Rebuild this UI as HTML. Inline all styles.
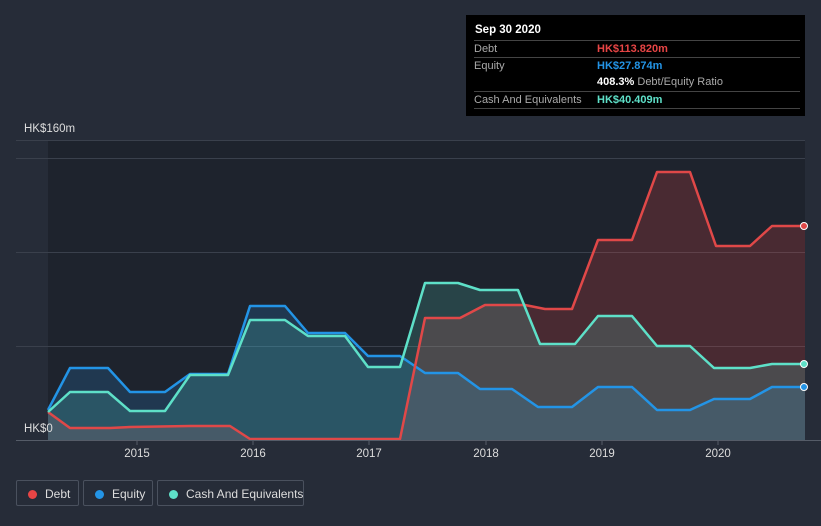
<!DOCTYPE html>
<html><head><meta charset="utf-8"><style>
html,body{margin:0;padding:0;background:#262c38;width:821px;height:526px;overflow:hidden;font-family:"Liberation Sans",sans-serif}
.tip{position:absolute;left:466px;top:15px;width:339px;height:101px;background:#000;color:#fff;font-size:11px}
.tip .h{position:absolute;left:9px;top:9px;font-weight:bold;font-size:11.5px}
.row{position:absolute;left:8px;width:326px;border-top:1px solid #444;height:17px;line-height:17px}
.row span{position:absolute;left:123px;font-weight:bold}
.lab{color:#aaa}
.leg{position:absolute;top:480px;height:26px;border:1px solid #4a515e;border-radius:2px;color:#ddd;font-size:12px;line-height:26px;box-sizing:border-box;white-space:nowrap}
.leg span{white-space:nowrap}
.leg i{position:absolute;left:11px;top:9px;width:9px;height:9px;border-radius:50%}
</style></head><body>
<svg width="821" height="526" style="position:absolute;left:0;top:0">
<rect x="48" y="140" width="757" height="300" fill="#1e232d"/>
<g stroke="#3a404c" stroke-width="1">
<line x1="16" y1="140.5" x2="805" y2="140.5"/>
<line x1="16" y1="158.5" x2="805" y2="158.5"/>
<line x1="16" y1="252.5" x2="805" y2="252.5"/>
<line x1="16" y1="346.5" x2="805" y2="346.5"/>
</g>
<polygon fill="rgba(229,70,70,0.22)" points="48,412 70,428 110,428 130,427 190,426 230,426 250,439 400,439 425,318 460,318 485,305 525,305 545,309 572,309 598,240 632,240 657,172 690,172 716,246 750,246 772,226 805,226 805,440 48,440"/>
<polygon fill="rgba(40,140,220,0.2)" points="48,410 70,368 108,368 130,392 165,392 190,374 228,374 250,306 285,306 308,333 345,333 368,356 400,356 425,373 458,373 480,389 512,389 538,407 572,407 598,387 632,387 657,410 690,410 714,399 750,399 772,387 805,387 805,440 48,440"/>
<polygon fill="rgba(90,220,200,0.18)" points="48,412 70,392 108,392 130,411 165,411 190,375 228,375 250,320 285,320 308,336 345,336 368,367 400,367 425,283 458,283 480,290 518,290 540,344 575,344 598,316 632,316 657,346 690,346 714,368 750,368 772,364 805,364 805,440 48,440"/>
<g fill="none" stroke-width="2.5" stroke-linejoin="round">
<polyline stroke="#2394e6" points="48,410 70,368 108,368 130,392 165,392 190,374 228,374 250,306 285,306 308,333 345,333 368,356 400,356 425,373 458,373 480,389 512,389 538,407 572,407 598,387 632,387 657,410 690,410 714,399 750,399 772,387 805,387"/>
<polyline stroke="#e04848" points="48,412 70,428 110,428 130,427 190,426 230,426 250,439 400,439 425,318 460,318 485,305 525,305 545,309 572,309 598,240 632,240 657,172 690,172 716,246 750,246 772,226 805,226"/>
<polyline stroke="#5ee0c8" points="48,412 70,392 108,392 130,411 165,411 190,375 228,375 250,320 285,320 308,336 345,336 368,367 400,367 425,283 458,283 480,290 518,290 540,344 575,344 598,316 632,316 657,346 690,346 714,368 750,368 772,364 805,364"/>
</g>
<circle cx="804" cy="226" r="3.5" fill="#e04848" stroke="#fff" stroke-width="1"/>
<circle cx="804" cy="387" r="3.5" fill="#2394e6" stroke="#fff" stroke-width="1"/>
<circle cx="804" cy="364" r="3.5" fill="#5ee0c8" stroke="#fff" stroke-width="1"/>
<line x1="16" y1="440.5" x2="821" y2="440.5" stroke="#555c68"/>
<g stroke="#555c68"><line x1="137" y1="440" x2="137" y2="445"/><line x1="253" y1="440" x2="253" y2="445"/><line x1="369" y1="440" x2="369" y2="445"/><line x1="486" y1="440" x2="486" y2="445"/><line x1="602" y1="440" x2="602" y2="445"/><line x1="718" y1="440" x2="718" y2="445"/></g>
<g fill="#ddd" font-size="11.5" text-anchor="middle" font-family="Liberation Sans">
<text x="137" y="457">2015</text><text x="253" y="457">2016</text><text x="369" y="457">2017</text><text x="486" y="457">2018</text><text x="602" y="457">2019</text><text x="718" y="457">2020</text>
</g>
<text x="24" y="132" fill="#ddd" font-size="11.5" font-family="Liberation Sans">HK$160m</text>
<text x="24" y="432" fill="#ddd" font-size="11.5" font-family="Liberation Sans">HK$0</text>
</svg>
<div class="tip">
<div class="h">Sep 30 2020</div>
<div class="row" style="top:25px"><b class="lab" style="font-weight:normal">Debt</b><span style="color:#e84545">HK$113.820m</span></div>
<div class="row" style="top:42px"><b class="lab" style="font-weight:normal">Equity</b><span style="color:#2394e6">HK$27.874m</span></div>
<div class="row" style="top:59px;border-top:none"><span>408.3% <b style="color:#aaa;font-weight:normal">Debt/Equity Ratio</b></span></div>
<div class="row" style="top:76px"><b class="lab" style="font-weight:normal">Cash And Equivalents</b><span style="color:#5ee0c8">HK$40.409m</span></div>
<div class="row" style="top:93px;height:0"></div>
</div>
<div class="leg" style="left:16px;width:63px"><i style="background:#e84545"></i><span style="position:absolute;left:28px">Debt</span></div>
<div class="leg" style="left:83px;width:70px"><i style="background:#2394e6"></i><span style="position:absolute;left:28px">Equity</span></div>
<div class="leg" style="left:157px;width:147px"><i style="background:#5ee0c8"></i><span style="position:absolute;left:28px">Cash And Equivalents</span></div>
</body></html>
